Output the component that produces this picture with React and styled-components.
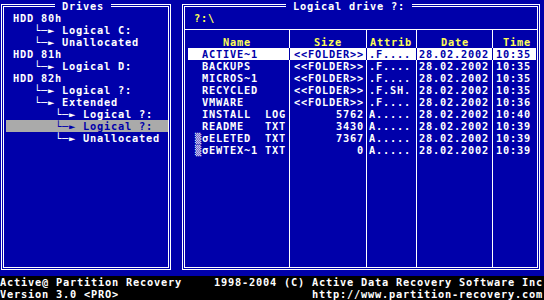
import styled, { createGlobalStyle } from 'styled-components';

const COLORS = {
  blue: '#0000AA',
  white: '#FFFFFF',
  yellow: '#FFFF55',
  gray: '#AAAAAA',
  black: '#000000',
};

const GlobalStyle = createGlobalStyle`
  html, body {
    margin: 0;
    padding: 0;
    background: ${COLORS.black};
  }
`;

// text-mode screen: 7px wide, 12px tall character cells
const Screen = styled('div')`
  width: 544px;
  height: 300px;
  display: flex;
  flex-direction: column;
  overflow: hidden;
  font-family: "DejaVu Sans Mono", "Liberation Mono", monospace;
  font-size: 10.3px;
  letter-spacing: 0.8px;
  font-weight: 700;
  line-height: 12px;
  color: ${COLORS.white};
  white-space: pre;
`;

const Workspace = styled('div')`
  height: 276px;
  box-sizing: border-box;
  background: ${COLORS.blue};
  display: flex;
  gap: 11px;
  padding: 4px 0 6px 1px;
`;

const Panel = styled('div')`
  position: relative;
  box-sizing: border-box;
  width: ${p => p.$width}px;
  height: 266px;
  border: 3px double ${COLORS.white};
  display: flex;
  flex-direction: column;
  padding-top: 5px;
`;

const PanelTitle = styled('div')`
  position: absolute;
  top: -7px;
  left: ${p => p.$left}px;
  height: 12px;
  background: ${COLORS.blue};
  color: ${COLORS.white};
`;

const TreeRow = styled('div')`
  height: 12px;
  margin-left: 2px;
  padding-left: ${p => p.$level * 21 + 7}px;
  background: ${p => (p.$selected ? COLORS.gray : 'transparent')};
  color: ${p => (p.$selected ? COLORS.blue : COLORS.white)};
`;

const PathRow = styled('div')`
  height: 12px;
  padding-left: 9px;
  color: ${COLORS.yellow};
`;

const Table = styled('div')`
  flex: 1;
  margin-top: 5px;
  border-top: 1px solid ${COLORS.white};
  display: flex;
  flex-direction: column;
`;

const Row = styled('div')`
  display: grid;
  grid-template-columns: 101px 77px 50px 76px 1fr;
  padding: 0 1px 0 3px;
  flex: ${p => (p.$fill ? 1 : 'none')};
`;

const Cell = styled('div')`
  box-sizing: border-box;
  height: ${p => (p.$fill ? 'auto' : p.$head ? '18px' : '12px')};
  padding-top: ${p => (p.$head ? '6px' : '0')};
  padding-left: ${p => p.$pad || 0}px;
  padding-right: ${p => p.$padRight || 0}px;
  text-align: ${p => p.$align || 'left'};
  border-left: ${p => (p.$first ? 'none' : `1px solid ${p.$selected ? COLORS.blue : COLORS.white}`)};
  background: ${p => (p.$selected ? COLORS.white : 'transparent')};
  color: ${p => (p.$head ? COLORS.yellow : p.$selected ? COLORS.blue : COLORS.white)};
`;

const Footer = styled('div')`
  height: 24px;
  background: ${COLORS.black};
  color: ${COLORS.white};
`;

const FooterLine = styled('div')`
  height: 12px;
  display: flex;
  justify-content: space-between;
  padding-right: 1px;
`;

const tree = [
  { level: 0, text: 'HDD 80h' },
  { level: 1, text: 'Logical C:' },
  { level: 1, text: 'Unallocated' },
  { level: 0, text: 'HDD 81h' },
  { level: 1, text: 'Logical D:' },
  { level: 0, text: 'HDD 82h' },
  { level: 1, text: 'Logical ?:' },
  { level: 1, text: 'Extended' },
  { level: 2, text: 'Logical ?:' },
  { level: 2, text: 'Logical ?:', selected: true },
  { level: 2, text: 'Unallocated' },
];

const columns = [
  { key: 'name', title: 'Name', head: 35, pad: 7 },
  { key: 'size', title: 'Size', head: 24, padRight: 2, align: 'right' },
  { key: 'attr', title: 'Attrib', head: 3, pad: 2 },
  { key: 'date', title: 'Date', head: 24, pad: 2 },
  { key: 'time', title: 'Time', head: 10, pad: 3 },
];

const files = [
  { name: ' ACTIVE~1', size: '<<FOLDER>>', attr: '.F....', time: '10:35', selected: true },
  { name: ' BACKUPS', size: '<<FOLDER>>', attr: '.F....', time: '10:35' },
  { name: ' MICROS~1', size: '<<FOLDER>>', attr: '.F....', time: '10:35' },
  { name: ' RECYCLED', size: '<<FOLDER>>', attr: '.F.SH.', time: '10:35' },
  { name: ' VMWARE', size: '<<FOLDER>>', attr: '.F....', time: '10:36' },
  { name: ' INSTALL  LOG', size: '5762', attr: 'A.....', time: '10:40' },
  { name: ' README   TXT', size: '3430', attr: 'A.....', time: '10:39' },
  { name: '▒σELETED  TXT', size: '7367', attr: 'A.....', time: '10:39' },
  { name: '▒σEWTEX~1 TXT', size: '0', attr: 'A.....', time: '10:39' },
].map(f => ({ ...f, date: '28.02.2002' }));

export default function App() {
  return (
    <Screen>
      <GlobalStyle />
      <Workspace>
        <Panel $width={170}>
          <PanelTitle $left={51}>{' Drives '}</PanelTitle>
          {tree.map((item, i) => (
            <TreeRow key={i} $level={item.level} $selected={item.selected}>
              {item.level > 0 ? '└─► ' : ''}
              {item.text}
            </TreeRow>
          ))}
        </Panel>

        <Panel $width={358}>
          <PanelTitle $left={101}>{' Logical drive ?: '}</PanelTitle>
          <PathRow>?:\</PathRow>
          <Table>
            <Row>
              {columns.map((c, i) => (
                <Cell key={c.key} $head $first={i === 0} $pad={c.head}>
                  {c.title}
                </Cell>
              ))}
            </Row>
            {files.map((f, r) => (
              <Row key={r}>
                {columns.map((c, i) => (
                  <Cell
                    key={c.key}
                    $first={i === 0}
                    $selected={f.selected}
                    $pad={c.pad}
                    $padRight={c.padRight}
                    $align={c.align}
                  >
                    {f[c.key]}
                  </Cell>
                ))}
              </Row>
            ))}
            <Row $fill>
              {columns.map((c, i) => (
                <Cell key={c.key} $fill $first={i === 0} />
              ))}
            </Row>
          </Table>
        </Panel>
      </Workspace>

      <Footer>
        <FooterLine>
          <span>Active@ Partition Recovery</span>
          <span>1998-2004 (C) Active Data Recovery Software Inc</span>
        </FooterLine>
        <FooterLine>
          <span>Version 3.0 {'<PRO>'}</span>
          <span>http://www.partition-recovery.com</span>
        </FooterLine>
      </Footer>
    </Screen>
  );
}
